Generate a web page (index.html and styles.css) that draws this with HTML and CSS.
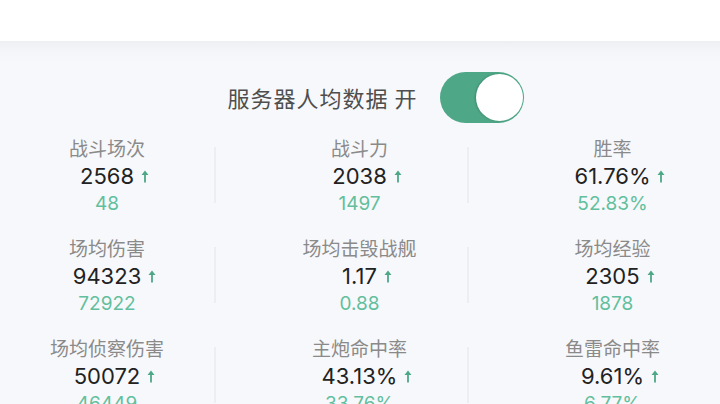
FILE: index.html
```html
<!DOCTYPE html>
<html lang="zh-CN">
<head>
<meta charset="utf-8">
<link rel="stylesheet" href="styles.css">
</head>
<body>
<header class="topbar"></header>
<main class="panel">
  <div class="toggle-row">
    <span class="toggle-label">服务器人均数据 开</span>
    <span class="switch"><span class="knob"></span></span>
  </div>
  <div class="grid">
    <div class="cell first"><div class="label">战斗场次</div><div class="value"><span class="num">2568<svg class="arrow" viewBox="0 0 8 13"><path d="M4 0.5 L7.5 5 L4.9 5 L4.9 12.5 L3.1 12.5 L3.1 5 L0.5 5 Z"/></svg></span></div><div class="sub">48</div></div>
    <div class="cell"><div class="label">战斗力</div><div class="value"><span class="num">2038<svg class="arrow" viewBox="0 0 8 13"><path d="M4 0.5 L7.5 5 L4.9 5 L4.9 12.5 L3.1 12.5 L3.1 5 L0.5 5 Z"/></svg></span></div><div class="sub">1497</div></div>
    <div class="cell"><div class="label">胜率</div><div class="value"><span class="num">61.76%<svg class="arrow" viewBox="0 0 8 13"><path d="M4 0.5 L7.5 5 L4.9 5 L4.9 12.5 L3.1 12.5 L3.1 5 L0.5 5 Z"/></svg></span></div><div class="sub">52.83%</div></div>

    <div class="cell first"><div class="label">场均伤害</div><div class="value"><span class="num">94323<svg class="arrow" viewBox="0 0 8 13"><path d="M4 0.5 L7.5 5 L4.9 5 L4.9 12.5 L3.1 12.5 L3.1 5 L0.5 5 Z"/></svg></span></div><div class="sub">72922</div></div>
    <div class="cell"><div class="label">场均击毁战舰</div><div class="value"><span class="num">1.17<svg class="arrow" viewBox="0 0 8 13"><path d="M4 0.5 L7.5 5 L4.9 5 L4.9 12.5 L3.1 12.5 L3.1 5 L0.5 5 Z"/></svg></span></div><div class="sub">0.88</div></div>
    <div class="cell"><div class="label">场均经验</div><div class="value"><span class="num">2305<svg class="arrow" viewBox="0 0 8 13"><path d="M4 0.5 L7.5 5 L4.9 5 L4.9 12.5 L3.1 12.5 L3.1 5 L0.5 5 Z"/></svg></span></div><div class="sub">1878</div></div>

    <div class="cell first"><div class="label">场均侦察伤害</div><div class="value"><span class="num">50072<svg class="arrow" viewBox="0 0 8 13"><path d="M4 0.5 L7.5 5 L4.9 5 L4.9 12.5 L3.1 12.5 L3.1 5 L0.5 5 Z"/></svg></span></div><div class="sub">46449</div></div>
    <div class="cell"><div class="label">主炮命中率</div><div class="value"><span class="num">43.13%<svg class="arrow" viewBox="0 0 8 13"><path d="M4 0.5 L7.5 5 L4.9 5 L4.9 12.5 L3.1 12.5 L3.1 5 L0.5 5 Z"/></svg></span></div><div class="sub">33.76%</div></div>
    <div class="cell"><div class="label">鱼雷命中率</div><div class="value"><span class="num">9.61%<svg class="arrow" viewBox="0 0 8 13"><path d="M4 0.5 L7.5 5 L4.9 5 L4.9 12.5 L3.1 12.5 L3.1 5 L0.5 5 Z"/></svg></span></div><div class="sub">6.77%</div></div>
  </div>
</main>
</body>
</html>
```
FILE: styles.css
```css
* { box-sizing: border-box; }
html, body {
  margin: 0;
  padding: 0;
  width: 720px;
  height: 404px;
  overflow: hidden;
  background: #f7f8fb;
  font-family: "Inter", "Noto Sans CJK SC", sans-serif;
}
.topbar {
  height: 41px;
  background: #ffffff;
}
.panel {
  background: linear-gradient(to bottom, #eeeff3 0px, #f4f5f9 10px, #f7f8fb 22px, #f7f8fb 100%);
  height: 363px;
  padding-top: 31px;
}
.toggle-row {
  display: flex;
  align-items: center;
  justify-content: center;
  gap: 23px;
  height: 51px;
  padding-left: 32px;
}
.toggle-label {
  font-family: "Noto Sans CJK SC", sans-serif;
  font-size: 22px;
  color: #4e4e4e;
  letter-spacing: 1px;
  line-height: 51px;
}
.switch {
  width: 84px;
  height: 51px;
  border-radius: 26px;
  background: #4ea787;
  display: flex;
  align-items: center;
  justify-content: flex-end;
  padding-right: 1px;
}
.knob {
  width: 47px;
  height: 47px;
  border-radius: 50%;
  background: #ffffff;
  box-shadow: -1px 0 2px rgba(0, 0, 0, 0.18);
}
.grid {
  margin-top: 11px;
  display: grid;
  grid-template-columns: 214px 253px 253px;
  row-gap: 16px;
}
.cell {
  position: relative;
  padding-left: 38px;
  text-align: center;
}
.cell.first { padding-left: 0; }
.cell::before {
  content: "";
  position: absolute;
  left: 0;
  top: 13px;
  bottom: 15px;
  width: 2px;
  background: #eeeef2;
}
.cell.first::before { display: none; }
.label {
  font-family: "Noto Sans CJK SC", sans-serif;
  font-size: 19px;
  line-height: 28px;
  color: #8a8a8a;
}
.value {
  font-size: 22px;
  line-height: 28px;
  color: #222222;
}
.num {
  position: relative;
  display: inline-block;
}
.arrow {
  position: absolute;
  left: calc(100% + 7px);
  top: 8px;
  width: 8px;
  height: 13px;
  fill: #4ea787;
}
.sub {
  font-size: 19px;
  line-height: 28px;
  color: #62bf9d;
}
```
